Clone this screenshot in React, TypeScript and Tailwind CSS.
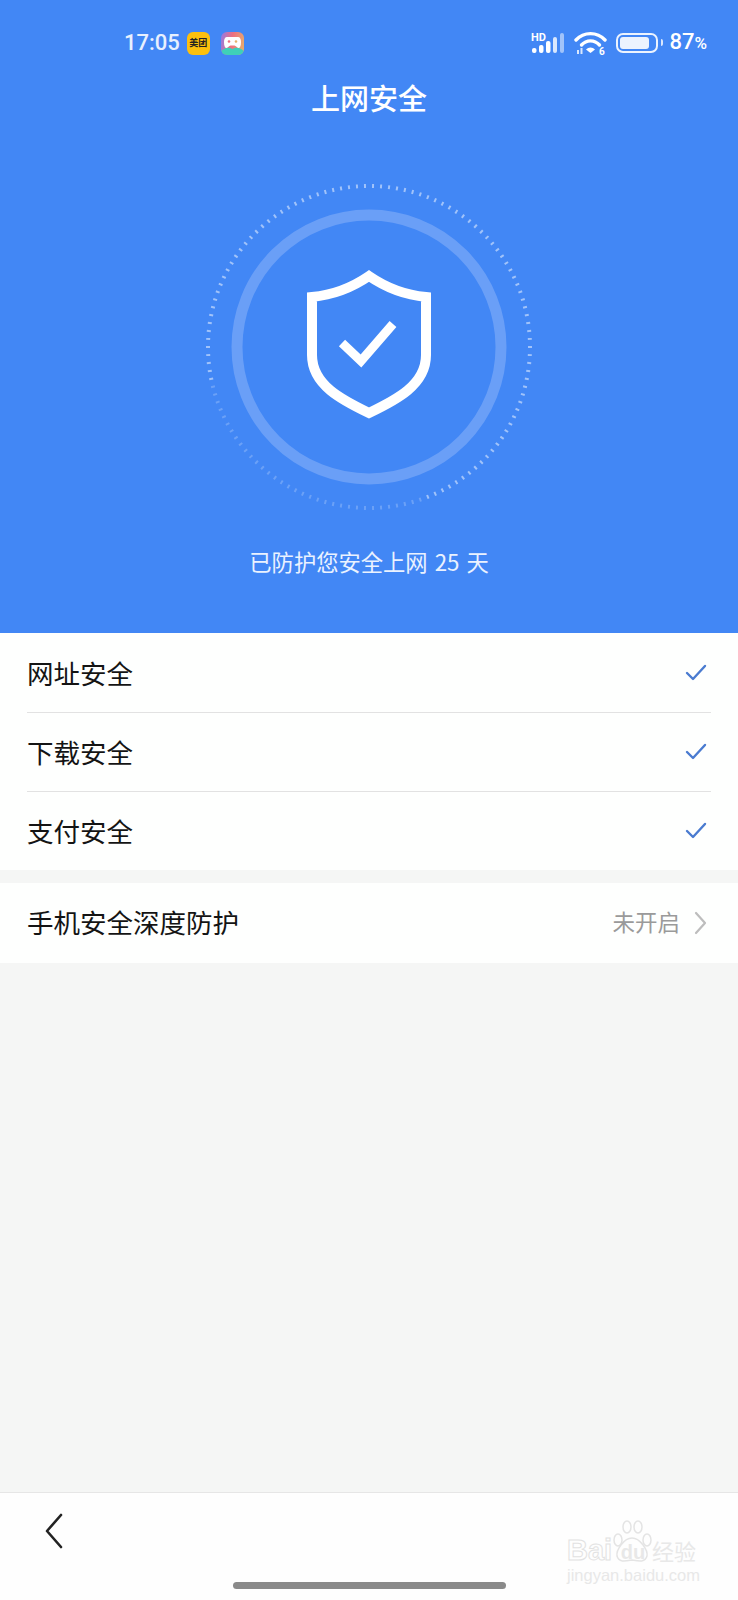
const cjk = "font-['Noto_Sans_CJK_SC',sans-serif]";

function SignalIcon() {
  return (
    <svg width="34" height="22" viewBox="0 0 34 22" fill="none">
      <text x="0" y="9" fill="#fff" fontSize="11" fontWeight="700" fontFamily="Roboto, sans-serif">HD</text>
      <rect x="1" y="16" width="4.500" height="5" rx="2" fill="#fff" />
      <rect x="8" y="13" width="4.500" height="8" rx="2" fill="#fff" />
      <rect x="15" y="9" width="4.500" height="12" rx="2" fill="#fff" />
      <rect x="22" y="5" width="4" height="16" rx="2" fill="#fff" fillOpacity="0.8" />
      <rect x="29" y="1" width="4" height="20" rx="2" fill="#fff" fillOpacity="0.5" />
    </svg>
  );
}

function WifiIcon() {
  return (
    <svg width="33" height="24" viewBox="0 0 33 24" fill="none">
      <path d="M2 9C10 0.500 23 0.500 31 9" stroke="#fff" strokeWidth="3.400" strokeLinecap="round" />
      <path d="M7.500 14C12.500 8.500 20.500 8.500 25.500 14" stroke="#fff" strokeWidth="3.400" strokeLinecap="round" />
      <path d="M12 18.500C14.500 15.800 18.500 15.800 21 18.500L16.500 22Z" fill="#fff" />
      <rect x="3" y="19" width="2" height="4" fill="#fff" fillOpacity="0.8" />
      <rect x="6.500" y="17" width="2" height="6" fill="#fff" fillOpacity="0.8" />
      <text x="25" y="23.500" fill="#fff" fontSize="10" fontWeight="700" fontFamily="Roboto, sans-serif">6</text>
    </svg>
  );
}

function BatteryIcon() {
  return (
    <div className="flex items-center gap-[3px]">
      <div className="h-[20px] w-[42px] rounded-[7px] border-2 border-white/90 p-[2px]">
        <div className="h-full w-[85%] rounded-[3px] bg-white/90" />
      </div>
      <div className="h-[7px] w-[2px] rounded-r-sm bg-white/80" />
    </div>
  );
}

function GameIcon() {
  return (
    <div className="ml-[4px] flex h-[23px] w-[23px] items-start justify-center overflow-hidden rounded-[6px] bg-[linear-gradient(100deg,#8f7be8,#ee6f80_45%,#e6b26c)]">
      <svg width="23" height="23" viewBox="0 0 23 23">
        <path d="M0 19C5 15 8 15 11.500 17C15 15 18 15 23 19V23H0Z" fill="#3fd0b8" />
        <path d="M6 5H17C19 5 20 7 20 10C20 14 19 16 17.500 16C16 16 15 13.500 13.500 13.500H9.500C8 13.500 7 16 5.500 16C4 16 3 14 3 10C3 7 4 5 6 5Z" fill="#fff" />
        <circle cx="8" cy="9.500" r="1.300" fill="#ee6f80" />
        <circle cx="15" cy="9.500" r="1.300" fill="#e6b26c" />
      </svg>
    </div>
  );
}

function ShieldDial() {
  const ticks = Array.from({ length: 126 }, (_, i) => i);
  return (
    <svg width="340" height="340" viewBox="-170 -170 340 340" fill="none">
      {ticks.map((i) => {
        const a = (i / 126) * Math.PI * 2;
        const faded = Math.sin(a) > 0.2 && Math.cos(a) < 0.35;
        return (
          <line
            key={i}
            x1={Math.cos(a) * 159}
            y1={Math.sin(a) * 159}
            x2={Math.cos(a) * 163}
            y2={Math.sin(a) * 163}
            stroke="#fff"
            strokeOpacity={faded ? 0.22 : 0.5}
            strokeWidth="2"
          />
        );
      })}
      <circle r="132" stroke="#6a9ff7" strokeWidth="11" />
      <g transform="translate(-62 -77)">
        <path
          d="M62 6C46 17 26 25 5 27V85C5 115 35 130 62 143C89 130 119 115 119 85V27C98 25 78 17 62 6Z"
          stroke="#fff"
          strokeWidth="10"
          strokeLinejoin="miter"
        />
        <path d="M35 73L54 91L86 54" stroke="#fff" strokeWidth="9" />
      </g>
    </svg>
  );
}

function CheckIcon() {
  return (
    <svg width="24" height="20" viewBox="0 0 24 20" fill="none">
      <path d="M3 10L9 16L21 3" stroke="#4a7bd0" strokeWidth="2.400" strokeLinecap="round" strokeLinejoin="round" />
    </svg>
  );
}

function SafeRow({ label, className }: { label: string; className: string }) {
  return (
    <div className={`flex items-center justify-between pr-[3px] ${className}`}>
      <span className="text-[26.500px] text-[#141414]">{label}</span>
      <CheckIcon />
    </div>
  );
}

function Watermark() {
  return (
    <div className="absolute left-[567px] top-[1520px] flex w-[132px] flex-col text-[#e8e8e8]">
      <svg className="absolute left-[44px] top-0" width="42" height="44" viewBox="0 0 42 44" fill="none" stroke="#e4e4e4" strokeWidth="1.500">
        <ellipse cx="7" cy="20" rx="4" ry="6" />
        <ellipse cx="16" cy="7" rx="4" ry="6" />
        <ellipse cx="27" cy="7" rx="4" ry="6" />
        <ellipse cx="36" cy="20" rx="4" ry="6" />
        <path d="M21 18C13 18 5 30 6 36C8 43 15 41 21 40C27 41 34 43 36 36C37 30 29 18 21 18Z" />
      </svg>
      <div className="mt-[16px] flex h-[28px] items-end">
        <span className="w-[46px] font-['Liberation_Sans',sans-serif] text-[29px] leading-[28px] font-bold text-transparent [-webkit-text-stroke:1px_#e2e2e2]">Bai</span>
        <span className="ml-[4px] w-[32px] text-center font-['Liberation_Sans',sans-serif] text-[20px] leading-[24px] font-bold">du</span>
        <span className={`ml-[3px] text-[22px] leading-[28px] ${cjk}`}>经验</span>
      </div>
      <div className="mt-[2px] font-['Liberation_Sans',sans-serif] text-[16.500px] leading-[18px] whitespace-nowrap">jingyan.baidu.com</div>
    </div>
  );
}

export default function App() {
  return (
    <div className={`relative flex h-[1600px] w-[738px] flex-col overflow-hidden bg-[#f5f6f5] ${cjk}`}>
      {/* Hero */}
      <section className="flex h-[633px] flex-col items-center bg-[#4287f5] text-white">
        <div className="flex h-[56px] w-full items-end justify-between pl-[124px] pr-[31px]">
          <div className="flex items-center gap-[7px]">
            <span className="font-['Roboto',sans-serif] text-[22px] leading-[26px] font-medium text-[#e8f0fe]">17:05</span>
            <div className="flex h-[23px] w-[23px] items-center justify-center rounded-[6px] bg-[#fcc00d] text-[9px] font-bold text-[#222]">美团</div>
            <GameIcon />
          </div>
          <div className="flex items-center">
            <SignalIcon />
            <div className="ml-[9px]">
              <WifiIcon />
            </div>
            <div className="ml-[9px]">
              <BatteryIcon />
            </div>
            <span className="ml-[6px] font-['Roboto',sans-serif] text-[22px] leading-[26px] font-medium">
              87<span className="text-[17px]">%</span>
            </span>
          </div>
        </div>

        <h1 className="mt-[21px] text-[29px] leading-[40px] font-medium">上网安全</h1>

        <div className="mt-[60px]">
          <ShieldDial />
        </div>

        <p className="mt-[29px] text-[22.300px] leading-[30px] whitespace-pre text-[#eaf2ff] [word-spacing:2px]">已防护您安全上网 25 天</p>
      </section>

      {/* Checks */}
      <section className="bg-[#fefffe] px-[27px]">
        <SafeRow label="网址安全" className="h-[80px] border-b border-[#e2e2e2]" />
        <SafeRow label="下载安全" className="h-[79px] border-b border-[#e2e2e2]" />
        <SafeRow label="支付安全" className="h-[78px]" />
      </section>

      <section className="mt-[13px] flex h-[80px] items-center justify-between bg-[#fefffe] px-[27px]">
        <span className="pb-[2px] text-[26.500px] text-[#141414]">手机安全深度防护</span>
        <div className="flex items-center gap-[14px] pr-[4px]">
          <span className="pb-[2px] text-[22.500px] text-[#9a9a9a]">未开启</span>
          <svg width="13" height="24" viewBox="0 0 13 24" fill="none">
            <path d="M2 2L11 12L2 22" stroke="#bdbdbd" strokeWidth="2.200" strokeLinecap="round" strokeLinejoin="round" />
          </svg>
        </div>
      </section>

      <div className="flex-1" />

      {/* Footer */}
      <footer className="flex h-[108px] flex-col border-t border-[#e6e6e6] bg-[#fefefe]">
        <div className="pl-[44px] pt-[20px]">
          <svg width="20" height="36" viewBox="0 0 20 36" fill="none">
            <path d="M17 2L3 18L17 34" stroke="#222" strokeWidth="2.600" strokeLinecap="round" strokeLinejoin="round" />
          </svg>
        </div>
        <div className="mt-auto mb-[11px] h-[7px] w-[273px] self-center rounded-full bg-[#8a8a8a]" />
      </footer>

      <Watermark />
    </div>
  );
}
